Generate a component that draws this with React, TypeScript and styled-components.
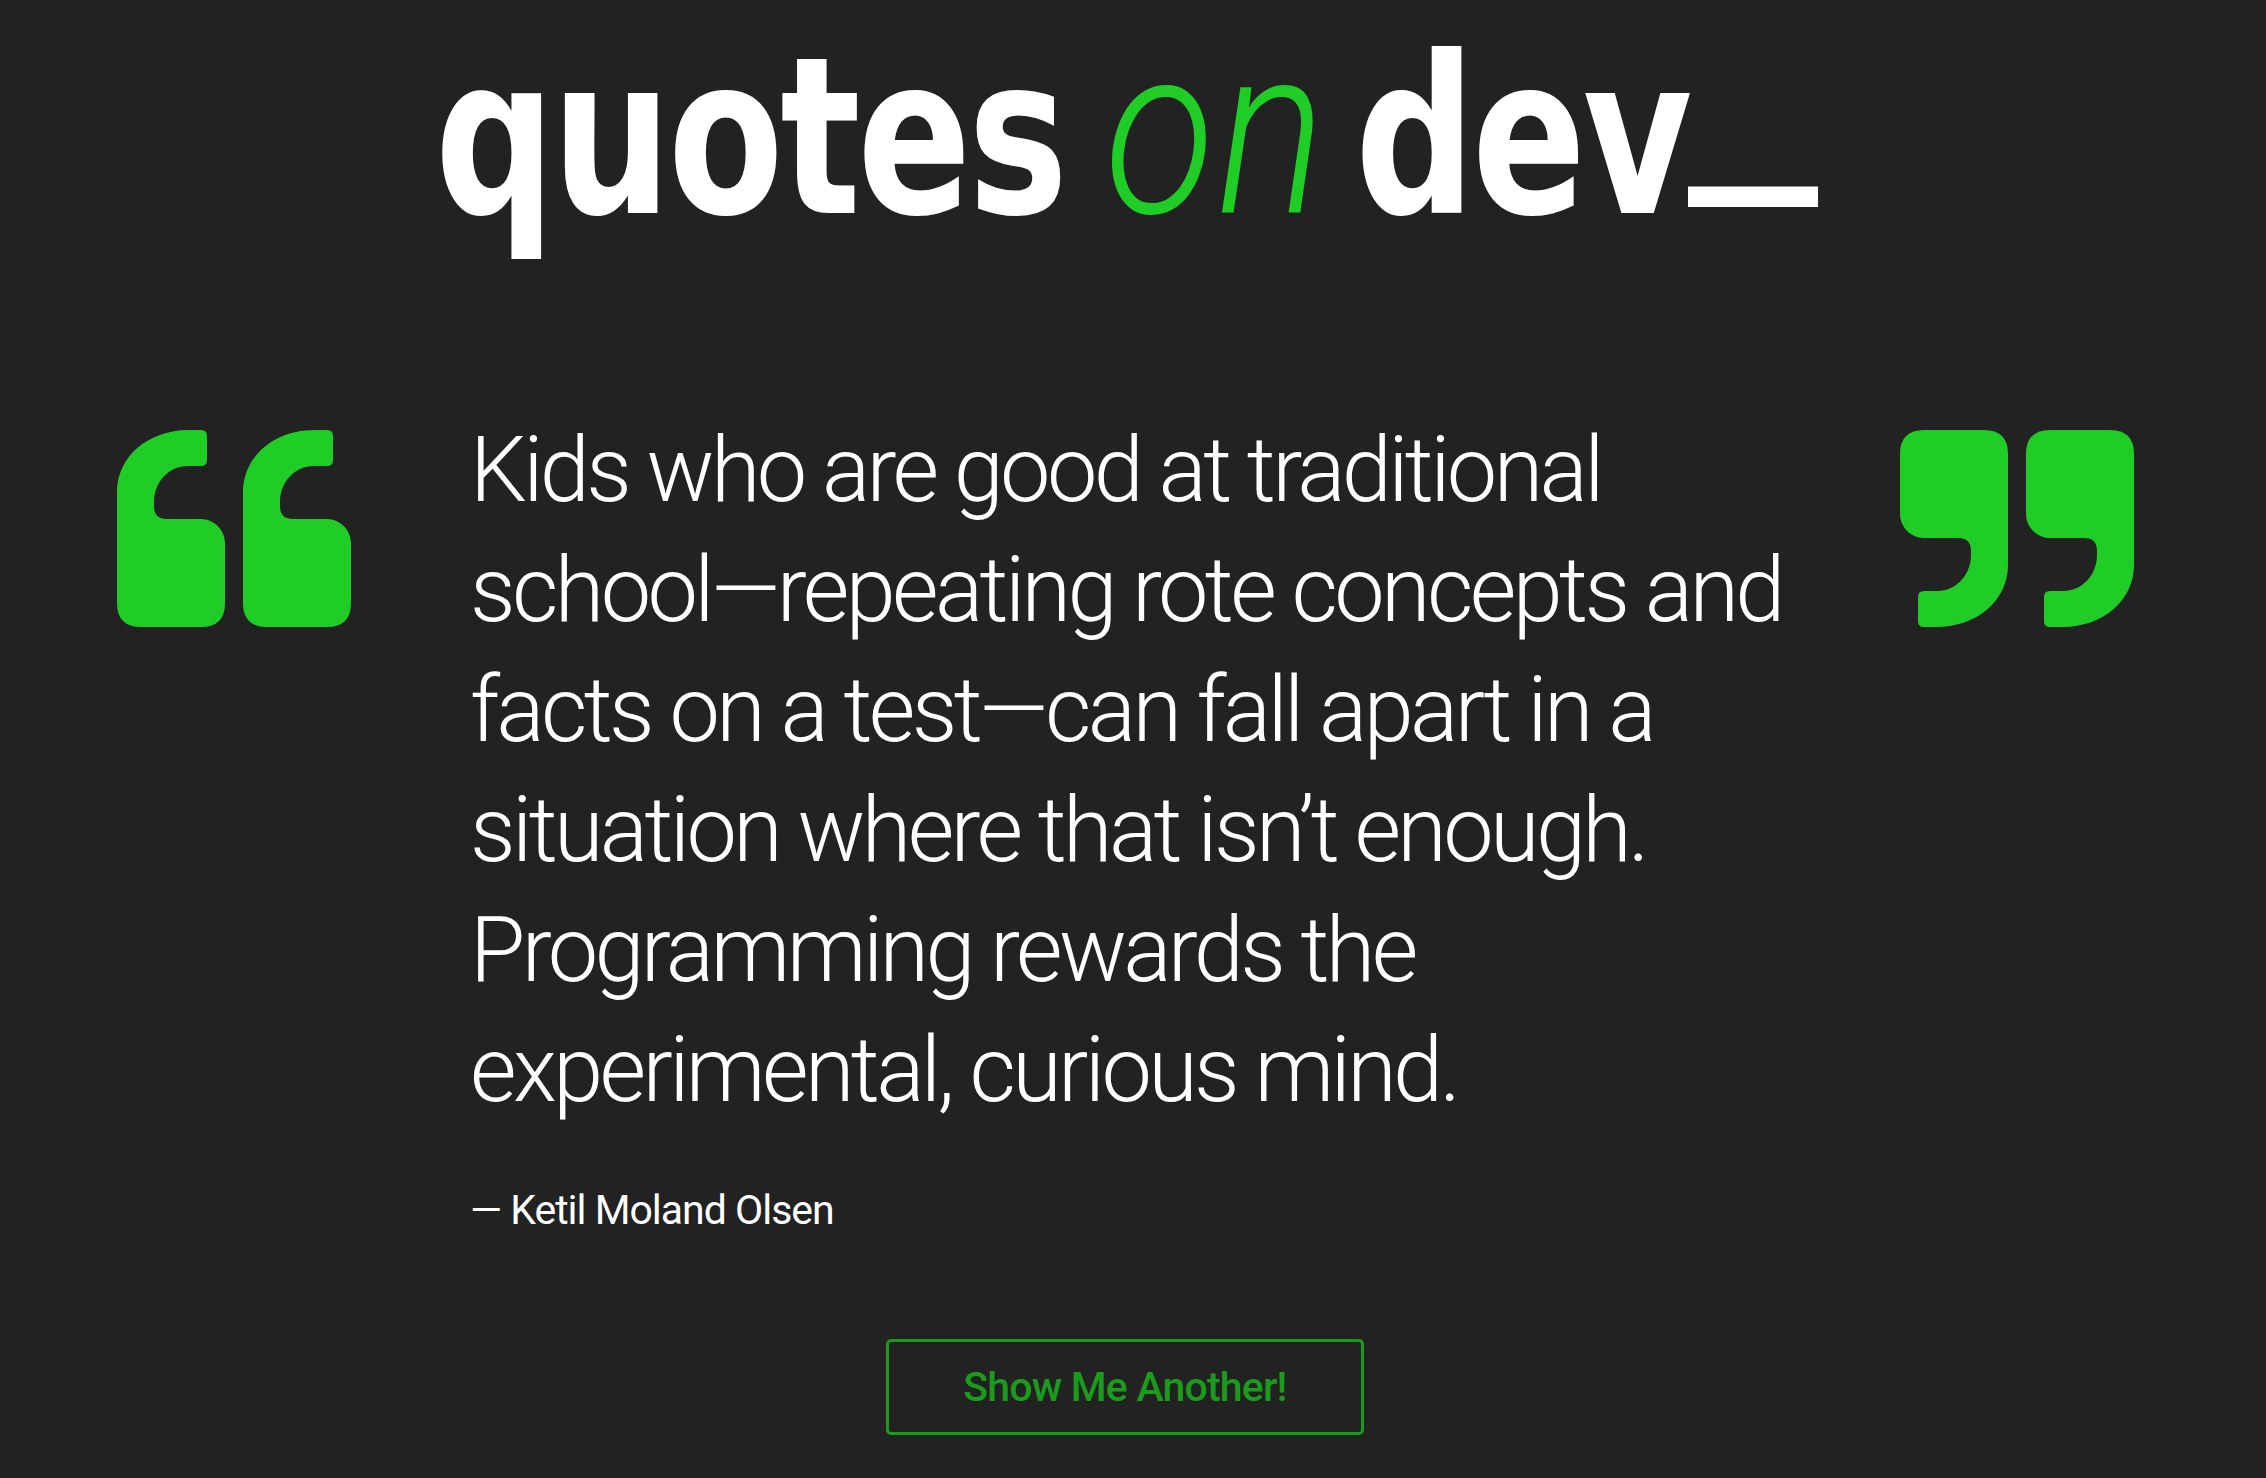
import React from 'react';
import styled, { createGlobalStyle } from 'styled-components';

const GlobalStyle = createGlobalStyle`
  html, body {
    margin: 0;
    padding: 0;
    background: #222222;
  }
  body {
    font-family: Roboto, "Liberation Sans", sans-serif;
    color: #ffffff;
  }
`;

const QUOTE_PATH =
  'M0 172 L0 62 C0 26 32 0 71 0 L84 0 Q90 0 90 6 L90 30 Q90 36 84 36 L71 36 C52 36 37 52 37 72 L37 76 Q37 89 50 89 L84 89 C97 89 108 100 108 113 L108 173 Q108 197 84 197 L24 197 Q0 197 0 173 Z';

const QuoteMark: React.FC<{ closing?: boolean }> = ({ closing }) => (
  <MarkSvg viewBox="0 0 234 197" width="234" height="197" aria-hidden="true">
    <g transform={closing ? 'rotate(180 117 98.5)' : undefined}>
      <path d={QUOTE_PATH} />
      <path d={QUOTE_PATH} transform="translate(126 0)" />
    </g>
  </MarkSvg>
);

export default function App() {
  return (
    <>
      <GlobalStyle />
      <Page>
        <Title>
          <Wordmark>
            <Word>quotes</Word>
            <On>on</On>
            <Word>
              dev<Cursor>_</Cursor>
            </Word>
          </Wordmark>
        </Title>
        <QuoteRow>
          <QuoteMark />
          <QuoteBody>
            <QuoteText>
              Kids who are good at traditional school—repeating rote concepts and facts on a test—can
              fall apart in a situation where that isn’t enough. Programming rewards the experimental,
              curious mind.
            </QuoteText>
            <Author>— Ketil Moland Olsen</Author>
          </QuoteBody>
          <QuoteMark closing />
        </QuoteRow>
        <ButtonRow>
          <AnotherButton type="button">Show Me Another!</AnotherButton>
        </ButtonRow>
      </Page>
    </>
  );
}

const Page = styled.main`
  min-height: 1478px;
  box-sizing: border-box;
  display: flex;
  flex-direction: column;
  align-items: stretch;
`;

const Title = styled.h1`
  margin: -8px 0 0;
  padding-right: 64px;
  display: flex;
  justify-content: center;
  font-family: "DejaVu Sans Condensed", "DejaVu Sans", sans-serif;
  font-weight: 700;
  font-size: 220px;
  line-height: 264px;
  color: #ffffff;
`;

const Wordmark = styled.span`
  display: inline-flex;
  align-items: baseline;
  gap: 47px;
  transform: scaleX(0.85);
  transform-origin: center;
  white-space: nowrap;
`;

const Word = styled.span`
  letter-spacing: -4px;
`;

const On = styled.span`
  font-family: Roboto, "Liberation Sans", sans-serif;
  font-style: italic;
  font-weight: 300;
  font-size: 238px;
  line-height: 280px;
  color: #20cc26;
  letter-spacing: 3px;
  margin-right: -15px;
`;

const Cursor = styled.span`
  display: inline-block;
  margin-left: -2px;
  transform: translateY(-58px) scaleX(1.55);
  transform-origin: left bottom;
`;

const QuoteRow = styled.section`
  display: grid;
  grid-template-columns: 234px 1fr 234px;
  padding: 0 132px 0 117px;
  margin-top: 158px;
  align-items: start;
`;

const MarkSvg = styled.svg`
  display: block;
  fill: #20cc26;
`;

const QuoteBody = styled.div`
  margin-top: -19px;
  padding: 0 40px 0 119px;
`;

const QuoteText = styled.p`
  margin: 0;
  font-family: Roboto, "Liberation Sans", sans-serif;
  font-weight: 300;
  font-size: 90px;
  line-height: 120px;
  letter-spacing: -3.6px;
  color: #ffffff;
`;

const Author = styled.p`
  margin: 54px 0 0;
  font-family: Roboto, "Liberation Sans", sans-serif;
  font-weight: 400;
  font-size: 41px;
  line-height: 50px;
  letter-spacing: -1px;
  color: #ffffff;
`;

const ButtonRow = styled.div`
  display: flex;
  justify-content: center;
  margin-top: 104px;
  padding-right: 16px;
`;

const AnotherButton = styled.button`
  width: 478px;
  height: 96px;
  background: transparent;
  border: 3px solid #1b9b1b;
  border-radius: 5px;
  color: #1b9b1b;
  font-family: Roboto, "Liberation Sans", sans-serif;
  font-size: 41px;
  font-weight: 500;
  letter-spacing: -0.8px;
  cursor: pointer;
`;
